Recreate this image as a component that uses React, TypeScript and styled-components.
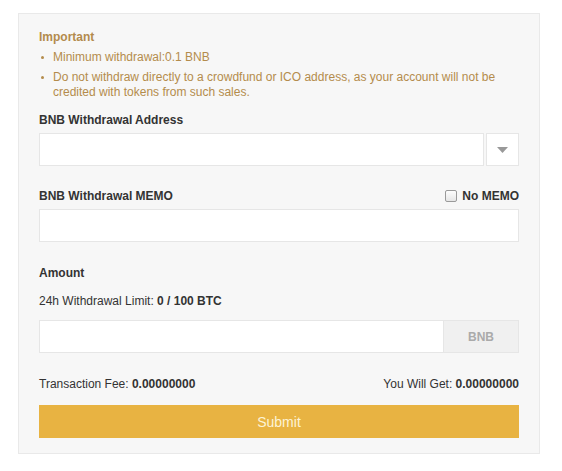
import React from 'react';
import styled, { createGlobalStyle } from 'styled-components';

const GlobalStyle = createGlobalStyle`
  body {
    margin: 0;
    background: #ffffff;
    font-family: "Liberation Sans", Arial, sans-serif;
  }
`

const Panel = styled.div`
  box-sizing: border-box;
  margin: 13px 0 0 18px;
  width: 522px;
  padding: 14px 20px 15px;
  background: #f7f7f7;
  border: 1px solid #e9e9e9;
  font-size: 12px;
  color: #333;
`

const Notice = styled.div`
  color: #b48c4c;
`

const NoticeTitle = styled.div`
  font-weight: bold;
  line-height: 18px;
  color: #b38b4d;
`

const NoticeList = styled.ul`
  margin: 4px 0 0;
  padding: 0 0 0 14px;
  list-style: none;
`

const NoticeItem = styled.li`
  position: relative;
  line-height: 15px;
  margin-top: 5px;
  &:first-child { margin-top: 0; }
  &::before {
    content: '';
    position: absolute;
    left: -12px;
    top: 6px;
    width: 3px;
    height: 3px;
    border-radius: 50%;
    background: #b48c4c;
  }
`

const LabelRow = styled.div<{ $top: number }>`
  display: flex;
  justify-content: space-between;
  align-items: center;
  margin-top: ${p => p.$top}px;
  line-height: 18px;
`

const Label = styled.div`
  font-weight: bold;
  color: #333;
`

const Hint = styled.div<{ $top: number }>`
  margin-top: ${p => p.$top}px;
  line-height: 18px;
  color: #333;
  b { font-weight: bold; }
`

const CheckLabel = styled.label`
  display: flex;
  align-items: center;
  gap: 5px;
  font-weight: bold;
  color: #333;
`

const Check = styled.span`
  box-sizing: border-box;
  width: 12px;
  height: 12px;
  border: 1px solid #9a9a9a;
  border-radius: 2px;
  background: linear-gradient(#fdfdfd, #e6e6e6);
`

const FieldRow = styled.div<{ $top?: number }>`
  display: flex;
  gap: 2px;
  margin-top: ${p => p.$top ?? 4}px;
  height: 33px;
`

const TextBox = styled.div`
  flex: 1;
  box-sizing: border-box;
  background: #fff;
  border: 1px solid #e6e6e6;
`

const DropButton = styled.div`
  box-sizing: border-box;
  width: 33px;
  display: flex;
  align-items: center;
  justify-content: center;
  background: #fff;
  border: 1px solid #e6e6e6;
`

const Addon = styled.div`
  box-sizing: border-box;
  width: 75px;
  margin-left: -2px;
  display: flex;
  align-items: center;
  justify-content: center;
  background: #f0f0f0;
  border: 1px solid #e6e6e6;
  border-left: none;
  font-weight: bold;
  color: #aaa;
`

const FeeRow = styled.div`
  display: flex;
  justify-content: space-between;
  margin-top: 22px;
  line-height: 18px;
  color: #333;
`

const SubmitButton = styled.button`
  display: block;
  width: 100%;
  height: 33px;
  margin-top: 12px;
  border: none;
  background: #e8b342;
  color: #fdf3d6;
  font-family: "Liberation Sans", Arial, sans-serif;
  font-size: 14px;
  cursor: pointer;
`

const Caret = () => (
  <svg width="11" height="6" viewBox="0 0 11 6">
    <path d="M0 0 L11 0 L5.5 6 Z" fill="#999" />
  </svg>
)

export default function App() {
  return (
    <>
      <GlobalStyle />
      <Panel>
        <Notice>
          <NoticeTitle>Important</NoticeTitle>
          <NoticeList>
            <NoticeItem>Minimum withdrawal:0.1 BNB</NoticeItem>
            <NoticeItem>
              Do not withdraw directly to a crowdfund or ICO address, as your account will not be credited with tokens from such sales.
            </NoticeItem>
          </NoticeList>
        </Notice>

        <LabelRow $top={11}>
          <Label>BNB Withdrawal Address</Label>
        </LabelRow>
        <FieldRow>
          <TextBox />
          <DropButton><Caret /></DropButton>
        </FieldRow>

        <LabelRow $top={21}>
          <Label>BNB Withdrawal MEMO</Label>
          <CheckLabel><Check />No MEMO</CheckLabel>
        </LabelRow>
        <FieldRow>
          <TextBox />
        </FieldRow>

        <LabelRow $top={22}>
          <Label>Amount</Label>
        </LabelRow>
        <Hint $top={10}>24h Withdrawal Limit: <b>0 / 100 BTC</b></Hint>
        <FieldRow $top={10}>
          <TextBox />
          <Addon>BNB</Addon>
        </FieldRow>

        <FeeRow>
          <span>Transaction Fee: <b>0.00000000</b></span>
          <span>You Will Get: <b>0.00000000</b></span>
        </FeeRow>
        <SubmitButton>Submit</SubmitButton>
      </Panel>
    </>
  );
}
